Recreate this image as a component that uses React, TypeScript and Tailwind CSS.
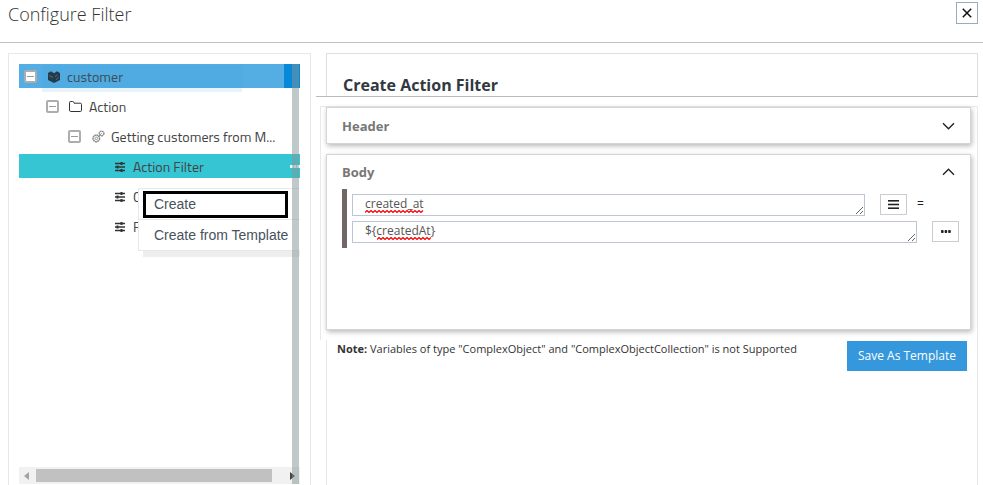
import type { ReactNode } from "react";

const heading = "font-['Open_Sans','Noto_Sans',sans-serif]";

function CollapseBox() {
  return (
    <button
      type="button"
      aria-label="Collapse"
      className="flex size-[13px] shrink-0 items-center justify-center rounded-[2px] border-2 border-[#adadad] bg-white"
    >
      <span className="h-px w-[7px] bg-[#999]" />
    </button>
  );
}

function PackageIcon() {
  return (
    <svg width="12" height="13" viewBox="0 -1 12 13" className="shrink-0" aria-hidden="true">
      <path d="M0 2 3 0.3 6 2.3 9 0.3 12 2V9L6 12 0 9Z" fill="#263238" />
      <path d="M1 4.5 5 6.5M7 5.5 9.5 4M8 9 10.5 6" stroke="#4f89ad" strokeWidth="0.7" fill="none" />
    </svg>
  );
}

function FolderIcon() {
  return (
    <svg width="13" height="11" viewBox="0 0 13 11" className="shrink-0" aria-hidden="true">
      <path
        d="M0.5 9V1.8Q0.5 0.5 1.8 0.5H3.7Q4.6 0.5 4.8 1.5L5 2.2H11.3Q12.5 2.2 12.5 3.4V9.2Q12.5 10.5 11.3 10.5H1.7Q0.5 10.5 0.5 9Z"
        fill="none"
        stroke="#333"
      />
    </svg>
  );
}

function GearsIcon() {
  return (
    <svg width="13" height="13" viewBox="0 0 13 13" className="shrink-0" aria-hidden="true" fill="none" stroke="#8c8c8c">
      <circle cx="4.3" cy="8.4" r="3.3" strokeWidth="1.5" strokeDasharray="1.9 0.3" />
      <circle cx="4.3" cy="8.4" r="1.3" strokeWidth="0.9" />
      <circle cx="9.6" cy="3.4" r="2.3" strokeWidth="1.4" strokeDasharray="1.7 0.3" />
      <path d="M6 7 9.8 3.2" strokeWidth="0.9" />
    </svg>
  );
}

function SlidersIcon() {
  return (
    <svg width="12" height="12" viewBox="0 -2 12 12" className="shrink-0" aria-hidden="true">
      <path d="M1 1.5H11M1 5H11M1 8.5H11" stroke="#333" strokeWidth="1.3" />
      <path d="M7.5 0V3M3.5 3.5V6.5M7.5 7V10" stroke="#333" strokeWidth="2" />
    </svg>
  );
}

function TreeRow({ className, children }: { className: string; children: ReactNode }) {
  return <li className={`flex h-6 items-center whitespace-nowrap text-[#444] ${className}`}>{children}</li>;
}

function TreeLabel({ className = "", children }: { className?: string; children: ReactNode }) {
  return <span className={`pt-[2px] ${className}`}>{children}</span>;
}

function Chevron({ up = false }: { up?: boolean }) {
  return (
    <svg width="13" height="8" viewBox="0 0 13 8" aria-hidden="true" fill="none" stroke="#222" strokeWidth="1.4">
      <path d={up ? "M1 6.8 6.5 1.3 12 6.8" : "M1 1.2 6.5 6.7 12 1.2"} />
    </svg>
  );
}

function Squiggle({ width, className }: { width: number; className: string }) {
  const steps = Array.from({ length: Math.floor(width / 2) }, (_, i) => `L${(i + 1) * 2} ${i % 2 ? 2.5 : 0.5}`);
  return (
    <svg width={width} height="3" className={`pointer-events-none absolute ${className}`} aria-hidden="true">
      <path d={`M0 2.5${steps.join("")}`} fill="none" stroke="#f00" strokeWidth="1.2" />
    </svg>
  );
}

function Sidebar() {
  return (
    <aside className="flex w-[303px] shrink-0 flex-col border border-b-0 border-[#e4e9ee] px-[10px] pt-[10px]">
      <div className="relative flex flex-1 flex-col overflow-hidden">
        <ul className="flex flex-col gap-[6px] font-['Titillium_Web','Open_Sans','Noto_Sans',sans-serif] text-sm leading-[22px]">
          <TreeRow className="relative bg-[#55aee3] pl-[5px] shadow-[inset_-16px_0_0_#0888d8]">
            <span className="absolute top-px left-[23px] h-[27px] w-[200px] bg-[#2196d3]/10" />
            <CollapseBox />
            <span className="ml-[11px] flex items-center gap-[7px]">
              <PackageIcon />
              <TreeLabel>customer</TreeLabel>
            </span>
          </TreeRow>
          <TreeRow className="pl-[27px]">
            <CollapseBox />
            <span className="ml-[10px] flex items-center gap-[7px]">
              <FolderIcon />
              <TreeLabel>Action</TreeLabel>
            </span>
          </TreeRow>
          <TreeRow className="pl-[49px]">
            <CollapseBox />
            <span className="ml-[11px] flex items-center gap-[6px]">
              <GearsIcon />
              <TreeLabel>Getting customers from M...</TreeLabel>
            </span>
          </TreeRow>
          <TreeRow className="gap-[7px] bg-[#36c6d3] pl-[95px]">
            <SlidersIcon />
            <TreeLabel>Action Filter</TreeLabel>
            <svg width="10" height="3" aria-hidden="true" fill="#fff" className="ml-auto">
              <rect width="3" height="3" />
              <rect x="3.5" width="3" height="3" />
              <rect x="7" width="3" height="3" />
            </svg>
          </TreeRow>
          <TreeRow className="gap-[7px] pl-[95px]">
            <SlidersIcon />
            <TreeLabel>C</TreeLabel>
          </TreeRow>
          <TreeRow className="gap-[7px] pl-[95px]">
            <SlidersIcon />
            <TreeLabel>F</TreeLabel>
          </TreeRow>
        </ul>

        <div
          role="menu"
          className="absolute top-[124px] left-[119px] w-[170px] border border-[#e8e8e8] bg-white font-['Liberation_Sans',Arial,sans-serif] text-sm text-[#47525d] shadow-[5px_6px_0_#eee]"
        >
          <div className="border-b border-[#e8e8e8] px-1 pt-[2px] pb-px">
            <button
              type="button"
              role="menuitem"
              className="block h-[27px] w-[145px] border-3 border-black pb-px pl-2 text-left leading-5"
            >
              Create
            </button>
          </div>
          <button type="button" role="menuitem" className="block h-[30px] pl-[15px] text-left whitespace-nowrap">
            Create from Template
          </button>
        </div>

        <div className="mt-auto mb-px flex h-[17px] items-center justify-between bg-[#f1f1f1] px-[5px]">
          <svg width="5" height="8" aria-hidden="true">
            <path d="M5 0V8L0 4Z" fill="#a3a3a3" />
          </svg>
          <span className="mr-auto ml-[7px] h-[13px] w-[236px] bg-[#c1c1c1]" />
          <svg width="5" height="8" aria-hidden="true">
            <path d="M0 0V8L5 4Z" fill="#444" />
          </svg>
        </div>
        <div className="absolute top-0 right-px bottom-px w-[7px] bg-[#819396]/50" />
      </div>
    </aside>
  );
}

const card = "border border-[#d5d5d5] bg-white shadow-[1px_2px_5px_rgba(0,0,0,0.28)]";
const field =
  "block h-[22px] w-full resize overflow-hidden border border-[#bdc5d5] bg-white pl-3 text-xs leading-[18px] text-[#555] outline-none";
const smallButton = "flex h-[21px] w-[27px] shrink-0 items-center justify-center border border-[#ccc] bg-white";

export default function App() {
  return (
    <div className={`flex h-screen flex-col overflow-hidden bg-white ${heading}`}>
      <header className="flex h-[43px] shrink-0 justify-between border-b border-[#c0c0c0] pr-[5px] pl-2">
        <h1 className="pt-[2px] text-lg leading-6 font-light text-[#333]">Configure Filter</h1>
        <button
          type="button"
          aria-label="Close"
          className="mt-[2px] flex size-[22px] items-center justify-center border border-[#9aabba]"
        >
          <svg width="10" height="10" viewBox="0 0 10 10" aria-hidden="true">
            <path d="M0.8 0.8 9.2 9.2M9.2 0.8 0.8 9.2" stroke="#111" strokeWidth="1.5" />
          </svg>
        </button>
      </header>

      <div className="flex min-h-0 flex-1 pt-[10px] pr-[5px] pl-2">
        <Sidebar />

        <main className="ml-[5px] flex min-w-0 flex-1 flex-col">
          <div className="border-b border-[#bbb] pl-[10px]">
            <div className="h-[43px] border border-b-0 border-[#dcdfe2] pt-[19px] pl-4">
              <h2 className="text-base leading-6 font-bold text-[#32383f]">Create Action Filter</h2>
            </div>
          </div>

          <div className="mt-[9px] ml-1 flex flex-col gap-[10px] border-x border-t border-[#e6eaed] pr-[6px] pb-[10px] pl-[5px]">
            <section className={`flex h-[37px] items-center justify-between px-[15px] ${card}`}>
              <h3 className="text-[13px] leading-5 font-bold text-[#777]">Header</h3>
              <button type="button" aria-label="Expand header">
                <Chevron />
              </button>
            </section>

            <section className={`h-[176px] px-[15px] pt-[7px] ${card}`}>
              <div className="flex items-center justify-between">
                <h3 className="text-[13px] leading-5 font-bold text-[#777]">Body</h3>
                <button type="button" aria-label="Collapse body">
                  <Chevron up />
                </button>
              </div>
              <div className="-mr-1 mt-[7px] flex flex-col gap-[5px] border-l-5 border-[#6f6866] py-[5px] pl-[5px]">
                <div className="flex">
                  <div className="relative flex-1">
                    <textarea aria-label="Field" spellCheck={false} className={field} defaultValue="created_at" />
                    <Squiggle width={59} className="top-[16px] left-[13px]" />
                  </div>
                  <button type="button" aria-label="Choose operator" className={`ml-[15px] ${smallButton}`}>
                    <svg width="11" height="9" aria-hidden="true" fill="#222">
                      <rect width="11" height="1.6" />
                      <rect y="3.7" width="11" height="1.6" />
                      <rect y="7.4" width="11" height="1.6" />
                    </svg>
                  </button>
                  <span className="w-[52px] pl-[10px] text-xs leading-[19px] text-[#222]">=</span>
                </div>
                <div className="flex">
                  <div className="relative flex-1">
                    <textarea aria-label="Value" spellCheck={false} className={field} defaultValue="${createdAt}" />
                    <Squiggle width={54} className="top-[16px] left-[25px]" />
                  </div>
                  <button type="button" aria-label="More options" className={`ml-[15px] ${smallButton}`}>
                    <svg width="10" height="3" aria-hidden="true" fill="#222">
                      <rect width="2.6" height="3" rx="0.8" />
                      <rect x="3.6" width="2.6" height="3" rx="0.8" />
                      <rect x="7.2" width="2.6" height="3" rx="0.8" />
                    </svg>
                  </button>
                </div>
              </div>
            </section>
          </div>

          <div className="ml-[10px] flex flex-1 items-start justify-between border-x border-[#e4e9ee] px-[10px]">
            <p className="text-[11px] leading-[18px] text-[#333]">
              <b>Note:</b> Variables of type "ComplexObject" and "ComplexObjectCollection" is not Supported
            </p>
            <button type="button" className="mt-px h-[30px] w-[120px] bg-[#3598dc] text-xs font-medium text-white">
              Save As Template
            </button>
          </div>
        </main>
      </div>
    </div>
  );
}
